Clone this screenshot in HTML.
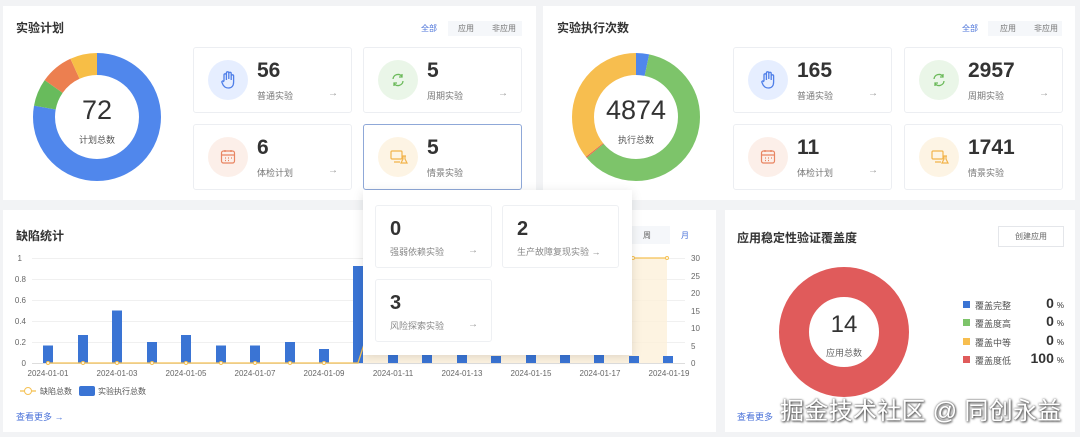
<!DOCTYPE html>
<html><head><meta charset="utf-8"><style>
*{margin:0;padding:0;box-sizing:border-box}
body{width:1080px;height:437px;background:#f2f3f5;font-family:"Liberation Sans","Noto Sans CJK SC",sans-serif;position:relative;overflow:hidden;color:#333}
div,span{white-space:nowrap}
.p{position:absolute;background:#fff}
.t{position:absolute;font-size:12px;font-weight:bold;color:#333}
.a{position:absolute}
.card{position:absolute;width:159px;height:66px;background:#fff;border:1px solid #eceef2;border-radius:3px}
.card .ic{position:absolute;left:14px;top:12px;width:40px;height:40px;border-radius:50%}
.card .n{position:absolute;left:63px;top:11px;font-size:21px;font-weight:bold;color:#333}
.card .l{position:absolute;left:63px;top:41px;font-size:9px;color:#777}
.card .ar{position:absolute;left:134px;top:40px;font-size:10px;color:#999}
.tabs{position:absolute;font-size:8px;color:#777}
.tabs span{position:absolute;top:0}
.pc{position:absolute;width:117px;height:63px;background:#fff;border:1px solid #eef0f3;border-radius:3px}
.pc .n{position:absolute;left:14px;top:12px;font-size:20px;font-weight:bold;color:#333}
.pc .l{position:absolute;left:14px;top:39px;font-size:9px;color:#888}
.lg{position:absolute;left:975px;font-size:9px;color:#555}
.vl{position:absolute;right:2px;width:80px;text-align:right;font-size:14px;font-weight:bold;color:#333}
.vl small{font-size:8px;font-weight:normal;margin-left:3px}
</style></head><body>

<!-- Panel 1 -->
<div class="p" style="left:3px;top:6px;width:533px;height:194px"></div>
<div class="t" style="left:16px;top:19px">实验计划</div>
<div class="a" style="left:448px;top:21px;width:74px;height:15px;background:#f5f7fa"></div>
<div class="tabs" style="left:421px;top:23px"><span style="left:0;color:#4a72d9">全部</span><span style="left:37px">应用</span><span style="left:71px">非应用</span></div>
<svg class="a" style="left:0;top:0" width="200" height="200">
<g transform="rotate(-90 97 117)" fill="none" stroke-width="22">
<circle cx="97" cy="117" r="53" stroke="#5087ec" stroke-dasharray="259 333" />
<circle cx="97" cy="117" r="53" stroke="#68bb5c" stroke-dasharray="0 259 23 333" />
<circle cx="97" cy="117" r="53" stroke="#ec7f50" stroke-dasharray="0 282 28 333" />
<circle cx="97" cy="117" r="53" stroke="#f7be46" stroke-dasharray="0 310 23 333" />
</g></svg>
<div class="a" style="left:57px;top:95px;width:80px;text-align:center;font-size:27px;color:#333">72</div>
<div class="a" style="left:57px;top:133px;width:80px;text-align:center;font-size:9px;color:#555">计划总数</div>

<div class="card" style="left:193px;top:47px"><div class="ic" style="background:#e6eeff"></div><svg class="a" style="left:26px;top:22px" width="18" height="20" viewBox="0 0 18 20" fill="none" stroke="#4f7fe8" stroke-width="1.3"><path d="M4 11V5a1.2 1.2 0 0 1 2.4 0v5M6.4 9V3a1.2 1.2 0 0 1 2.4 0v6M8.8 9V3.5a1.2 1.2 0 0 1 2.4 0V10M11.2 10V6a1.2 1.2 0 0 1 2.4 0v6c0 4-2 6-5 6s-4-1-5.5-3L2 12.5c-.6-1 .6-2 1.5-1.2L4 12"/></svg><div class="n">56</div><div class="l">普通实验</div><div class="ar">→</div></div>
<div class="card" style="left:363px;top:47px"><div class="ic" style="background:#eaf6e8"></div><svg class="a" style="left:26px;top:24px" width="16" height="16" viewBox="0 0 16 16" fill="none" stroke="#6cba5b" stroke-width="1.3"><path d="M3 7a5 5 0 0 1 9-2.5M12 2v3H9M13 9a5 5 0 0 1-9 2.5M4 14v-3h3"/></svg><div class="n">5</div><div class="l">周期实验</div><div class="ar">→</div></div>
<div class="card" style="left:193px;top:124px"><div class="ic" style="background:#fcefe9"></div><svg class="a" style="left:26px;top:24px" width="16" height="16" viewBox="0 0 16 16" fill="none" stroke="#e88562" stroke-width="1.2"><rect x="1.5" y="2" width="13" height="12" rx="2"/><path d="M1.5 6h13M5 1v2M11 1v2M5 9h1M8 9h1M11 9h1M5 11.5h1M8 11.5h1"/></svg><div class="n">6</div><div class="l">体检计划</div><div class="ar">→</div></div>
<div class="card" style="left:363px;top:124px;border-color:#8fa8d8"><div class="ic" style="background:#fdf4e4"></div><svg class="a" style="left:26px;top:24px" width="18" height="16" viewBox="0 0 18 16" fill="none" stroke="#f2b34a" stroke-width="1.2"><rect x="1" y="2" width="11" height="8" rx="1"/><path d="M4 13h6M12 7h4M13 7v3l-2 4h6l-2-4V7"/></svg><div class="n">5</div><div class="l">情景实验</div></div>

<!-- Panel 2 -->
<div class="p" style="left:543px;top:6px;width:532px;height:194px"></div>
<div class="t" style="left:557px;top:19px">实验执行次数</div>
<div class="a" style="left:988px;top:21px;width:74px;height:15px;background:#f5f7fa"></div>
<div class="tabs" style="left:962px;top:23px"><span style="left:0;color:#4a72d9">全部</span><span style="left:38px">应用</span><span style="left:72px">非应用</span></div>
<svg class="a" style="left:0;top:0" width="1080" height="200">
<g transform="rotate(-90 636 117)" fill="none" stroke-width="22">
<circle cx="636" cy="117" r="53" stroke="#5087ec" stroke-dasharray="11 333" />
<circle cx="636" cy="117" r="53" stroke="#7dc46a" stroke-dasharray="0 11 202 333" />
<circle cx="636" cy="117" r="53" stroke="#e8684a" stroke-dasharray="0 213 1 333" />
<circle cx="636" cy="117" r="53" stroke="#f7be4f" stroke-dasharray="0 214 119 333" />
</g></svg>
<div class="a" style="left:586px;top:95px;width:100px;text-align:center;font-size:27px;color:#333">4874</div>
<div class="a" style="left:596px;top:133px;width:80px;text-align:center;font-size:9px;color:#555">执行总数</div>

<div class="card" style="left:733px;top:47px"><div class="ic" style="background:#e6eeff"></div><svg class="a" style="left:26px;top:22px" width="18" height="20" viewBox="0 0 18 20" fill="none" stroke="#4f7fe8" stroke-width="1.3"><path d="M4 11V5a1.2 1.2 0 0 1 2.4 0v5M6.4 9V3a1.2 1.2 0 0 1 2.4 0v6M8.8 9V3.5a1.2 1.2 0 0 1 2.4 0V10M11.2 10V6a1.2 1.2 0 0 1 2.4 0v6c0 4-2 6-5 6s-4-1-5.5-3L2 12.5c-.6-1 .6-2 1.5-1.2L4 12"/></svg><div class="n">165</div><div class="l">普通实验</div><div class="ar">→</div></div>
<div class="card" style="left:904px;top:47px"><div class="ic" style="background:#eaf6e8"></div><svg class="a" style="left:26px;top:24px" width="16" height="16" viewBox="0 0 16 16" fill="none" stroke="#6cba5b" stroke-width="1.3"><path d="M3 7a5 5 0 0 1 9-2.5M12 2v3H9M13 9a5 5 0 0 1-9 2.5M4 14v-3h3"/></svg><div class="n">2957</div><div class="l">周期实验</div><div class="ar">→</div></div>
<div class="card" style="left:733px;top:124px"><div class="ic" style="background:#fcefe9"></div><svg class="a" style="left:26px;top:24px" width="16" height="16" viewBox="0 0 16 16" fill="none" stroke="#e88562" stroke-width="1.2"><rect x="1.5" y="2" width="13" height="12" rx="2"/><path d="M1.5 6h13M5 1v2M11 1v2M5 9h1M8 9h1M11 9h1M5 11.5h1M8 11.5h1"/></svg><div class="n">11</div><div class="l">体检计划</div><div class="ar">→</div></div>
<div class="card" style="left:904px;top:124px"><div class="ic" style="background:#fdf4e4"></div><svg class="a" style="left:26px;top:24px" width="18" height="16" viewBox="0 0 18 16" fill="none" stroke="#f2b34a" stroke-width="1.2"><rect x="1" y="2" width="11" height="8" rx="1"/><path d="M4 13h6M12 7h4M13 7v3l-2 4h6l-2-4V7"/></svg><div class="n">1741</div><div class="l">情景实验</div></div>

<!-- Panel 3 -->
<div class="p" style="left:3px;top:210px;width:713px;height:222px"></div>
<div class="t" style="left:16px;top:227px">缺陷统计</div>
<div class="a" style="left:632px;top:226px;width:70px;height:18px;background:#f5f7fa"></div>
<div class="a" style="left:670px;top:226px;width:32px;height:18px;background:#fff"></div>
<div class="a" style="left:643px;top:230px;font-size:8px;color:#666">周</div>
<div class="a" style="left:681px;top:230px;font-size:8px;color:#4a72d9">月</div>
<svg class="a" style="left:0;top:0" width="720" height="437">
<g stroke="#f0f0f0" stroke-width="1"><line x1="32" y1="258.5" x2="685" y2="258.5"/><line x1="32" y1="279.5" x2="685" y2="279.5"/><line x1="32" y1="300.5" x2="685" y2="300.5"/><line x1="32" y1="321.5" x2="685" y2="321.5"/><line x1="32" y1="342.5" x2="685" y2="342.5"/></g>
<line x1="32" y1="363.5" x2="685" y2="363.5" stroke="#ddd"/>
<polygon points="358,363 392,258 667,258 667,363" fill="#fdf0da" opacity="0.8"/>
<g fill="#3a74d4">
<rect x="43" y="345.5" width="10" height="17.5"/>
<rect x="78" y="335" width="10" height="28"/>
<rect x="112" y="310.5" width="10" height="52.5"/>
<rect x="147" y="342" width="10" height="21"/>
<rect x="181" y="335" width="10" height="28"/>
<rect x="216" y="345.5" width="10" height="17.5"/>
<rect x="250" y="345.5" width="10" height="17.5"/>
<rect x="285" y="342" width="10" height="21"/>
<rect x="319" y="349" width="10" height="14"/>
<rect x="353" y="266" width="10" height="97"/>
<rect x="388" y="349" width="10" height="14"/>
<rect x="422" y="349" width="10" height="14"/>
<rect x="457" y="349" width="10" height="14"/>
<rect x="491" y="356" width="10" height="7"/>
<rect x="526" y="349" width="10" height="14"/>
<rect x="560" y="349" width="10" height="14"/>
<rect x="594" y="349" width="10" height="14"/>
<rect x="629" y="356" width="10" height="7"/>
<rect x="663" y="356" width="10" height="7"/>
</g>
<polyline points="48,363 358,363 392,258 667,258" fill="none" stroke="#f5c154" stroke-width="1.3"/>
<g fill="#fff" stroke="#f5c154" stroke-width="1"><circle cx="48" cy="363" r="1.5"/><circle cx="83" cy="363" r="1.5"/><circle cx="117" cy="363" r="1.5"/><circle cx="152" cy="363" r="1.5"/><circle cx="186" cy="363" r="1.5"/><circle cx="221" cy="363" r="1.5"/><circle cx="255" cy="363" r="1.5"/><circle cx="290" cy="363" r="1.5"/><circle cx="324" cy="363" r="1.5"/><circle cx="633" cy="258" r="1.5"/><circle cx="667" cy="258" r="1.5"/></g>
<g font-size="8" fill="#666" font-family="Liberation Sans">
<text x="22" y="261" text-anchor="end">1</text><text x="26" y="282" text-anchor="end">0.8</text><text x="26" y="303" text-anchor="end">0.6</text><text x="26" y="324" text-anchor="end">0.4</text><text x="26" y="345" text-anchor="end">0.2</text><text x="26" y="366" text-anchor="end">0</text>
<text x="691" y="261">30</text><text x="691" y="279">25</text><text x="691" y="296">20</text><text x="691" y="314">15</text><text x="691" y="331">10</text><text x="691" y="349">5</text><text x="691" y="366">0</text>
<text x="48" y="376" text-anchor="middle">2024-01-01</text><text x="117" y="376" text-anchor="middle">2024-01-03</text><text x="186" y="376" text-anchor="middle">2024-01-05</text><text x="255" y="376" text-anchor="middle">2024-01-07</text><text x="324" y="376" text-anchor="middle">2024-01-09</text><text x="393" y="376" text-anchor="middle">2024-01-11</text><text x="462" y="376" text-anchor="middle">2024-01-13</text><text x="531" y="376" text-anchor="middle">2024-01-15</text><text x="600" y="376" text-anchor="middle">2024-01-17</text><text x="669" y="376" text-anchor="middle">2024-01-19</text>
</g>
<line x1="20" y1="391" x2="36" y2="391" stroke="#f5c154" stroke-width="1.3"/><circle cx="28" cy="391" r="3.5" fill="#fff" stroke="#f5c154"/>
<rect x="79" y="386" width="16" height="10" rx="2" fill="#3a74d4"/>
</svg>
<div class="a" style="left:40px;top:386px;font-size:8px;color:#555">缺陷总数</div>
<div class="a" style="left:98px;top:386px;font-size:8px;color:#555">实验执行总数</div>
<div class="a" style="left:16px;top:410px;font-size:9px;color:#4a72d9">查看更多 →</div>

<!-- Panel 4 -->
<div class="p" style="left:725px;top:210px;width:350px;height:222px"></div>
<div class="t" style="left:737px;top:229px">应用稳定性验证覆盖度</div>
<div class="a" style="left:998px;top:226px;width:66px;height:21px;border:1px solid #e4e6ea;font-size:8px;color:#666;text-align:center;line-height:19px">创建应用</div>
<svg class="a" style="left:0;top:0" width="1080" height="437"><circle cx="844" cy="332" r="50" fill="none" stroke="#e05b5b" stroke-width="30"/>
<rect x="963" y="301" width="7" height="7" fill="#3a74d4"/><rect x="963" y="319" width="7" height="7" fill="#7dc46a"/><rect x="963" y="338" width="7" height="7" fill="#f7be4f"/><rect x="963" y="356" width="7" height="7" fill="#e05b5b"/></svg>
<div class="a" style="left:814px;top:311px;width:60px;text-align:center;font-size:24px;color:#333">14</div>
<div class="a" style="left:814px;top:346px;width:60px;text-align:center;font-size:9px;color:#666">应用总数</div>
<div class="lg" style="top:299px">覆盖完整</div><div class="lg" style="top:317px">覆盖度高</div><div class="lg" style="top:336px">覆盖中等</div><div class="lg" style="top:354px">覆盖度低</div>
<div class="vl" style="left:984px;top:295px">0<small>%</small></div>
<div class="vl" style="left:984px;top:313px">0<small>%</small></div>
<div class="vl" style="left:984px;top:332px">0<small>%</small></div>
<div class="vl" style="left:984px;top:350px">100<small>%</small></div>
<div class="a" style="left:737px;top:410px;font-size:9px;color:#4a72d9">查看更多</div>
<div class="a" style="left:780px;top:391px;font-size:24px;letter-spacing:0.3px;color:#fff;text-shadow:0 0 2px #555,1px 1px 2px #444">掘金技术社区 @ 同创永益</div>

<!-- Popup -->
<div class="p" style="left:363px;top:190px;width:269px;height:165px;box-shadow:0 2px 10px rgba(0,0,0,.12)"></div>
<div class="pc" style="left:375px;top:205px"><div class="n">0</div><div class="l">强弱依赖实验</div><div class="a" style="left:92px;top:39px;font-size:10px;color:#999">→</div></div>
<div class="pc" style="left:502px;top:205px"><div class="n">2</div><div class="l">生产故障复现实验 →</div></div>
<div class="pc" style="left:375px;top:279px"><div class="n">3</div><div class="l">风险探索实验</div><div class="a" style="left:92px;top:39px;font-size:10px;color:#999">→</div></div>
</body></html>
